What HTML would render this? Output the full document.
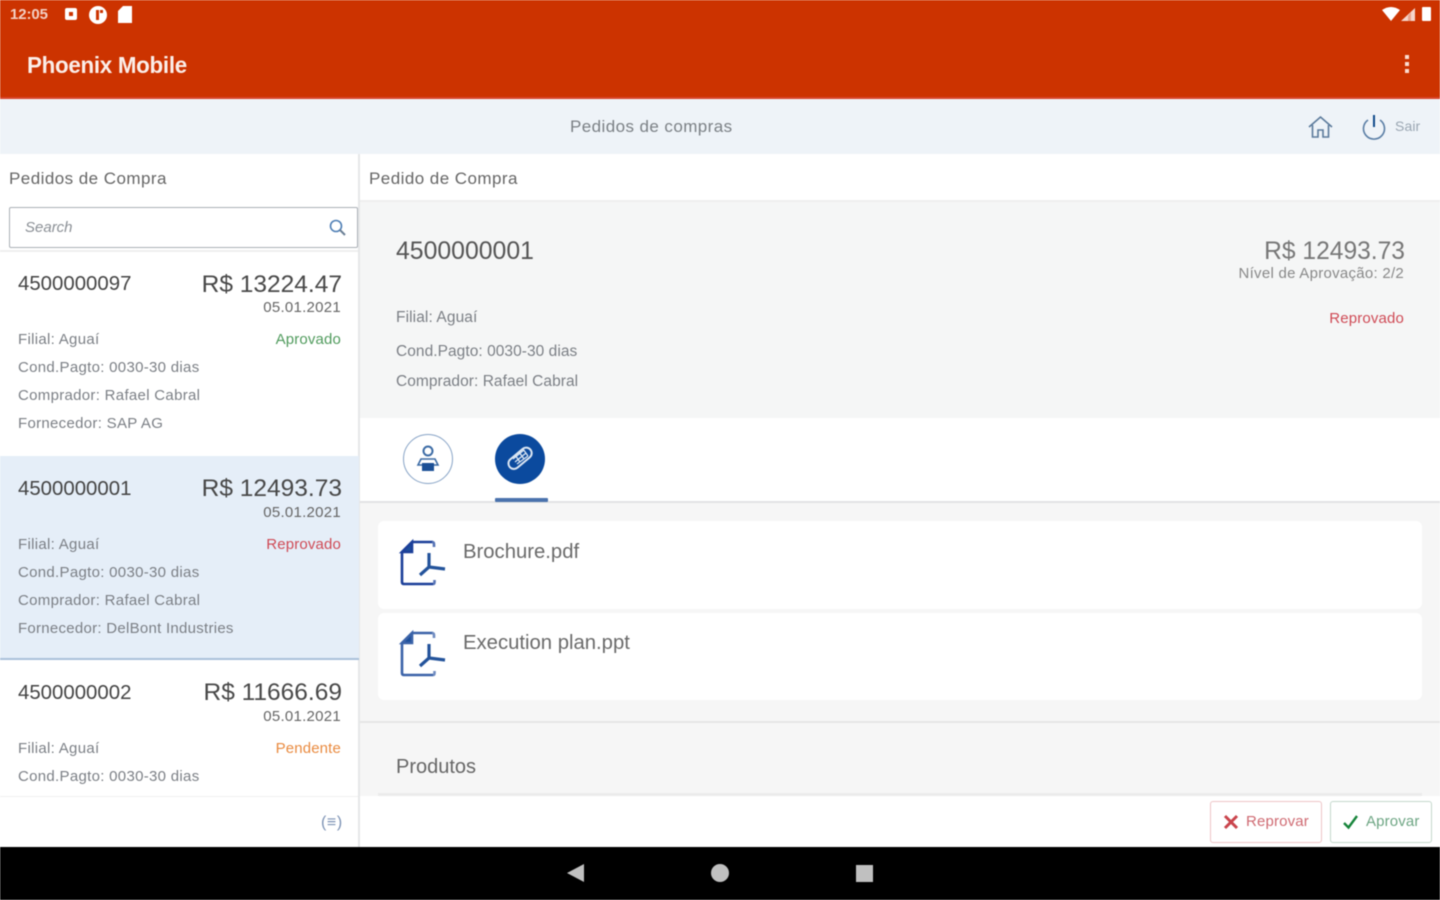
<!DOCTYPE html>
<html lang="pt">
<head>
<meta charset="utf-8">
<title>Phoenix Mobile</title>
<style>
html,body{margin:0;padding:0;width:1440px;height:900px;overflow:hidden;background:#fff}
#r{position:relative;width:1440px;height:900px;overflow:hidden;font-family:"Liberation Sans",sans-serif;color:#555;filter:blur(.6px)}
.a{position:absolute}
.t{position:absolute;white-space:nowrap;line-height:1}
.g{font-size:15px;letter-spacing:.3px;color:#7b7f85}
.n{font-size:20.400px;color:#444}
.v{font-size:24.500px;color:#484848}
.d{font-size:15px;letter-spacing:.27px;color:#666}
.s{font-size:15px;letter-spacing:.15px}
svg{position:absolute;overflow:visible}
</style>
</head>
<body>
<div id="r">
<!-- header -->
<div class="a" style="left:0;top:0;width:1440px;height:98px;background:#cc3300"></div>
<div class="a" style="left:0;top:97px;width:1440px;height:2px;background:#d8452a"></div>
<div class="t" style="left:10px;top:7px;font-size:15px;font-weight:bold;color:#f3d0c4;letter-spacing:-.1px">12:05</div>
<div class="a" style="left:65px;top:8px;width:12px;height:12px;background:#fff;border-radius:2px"></div>
<div class="a" style="left:69px;top:12px;width:4px;height:4px;background:#cc3300"></div>
<div class="a" style="left:89px;top:6px;width:18px;height:18px;background:#fff;border-radius:50%"></div>
<div class="a" style="left:96px;top:10px;width:3px;height:10px;background:#cc3300"></div>
<div class="a" style="left:100px;top:10px;width:3px;height:3px;background:#cc3300"></div>
<svg style="left:118px;top:6px" width="14" height="17"><path d="M5 0H14V17H0V5Z" fill="#fff"/></svg>
<svg style="left:1382px;top:7px" width="18" height="14"><path d="M0 3Q9-3 18 3L9 14Z" fill="#fff"/></svg>
<svg style="left:1401px;top:8px" width="14" height="13"><path d="M14 0V13H0Z" fill="#fff" opacity=".8"/><path d="M10 4V13H7V8Z" fill="#cc3300" opacity=".3"/></svg>
<div class="a" style="left:1422px;top:7px;width:9px;height:14px;background:#fff;border-radius:1px"></div>
<div class="t" style="left:27px;top:54px;font-size:23px;font-weight:bold;color:#fbeee9;letter-spacing:-.3px;transform:scaleX(.972);transform-origin:left">Phoenix Mobile</div>
<div class="a" style="left:1405px;top:55px;width:4px;height:4px;background:#fbdcd0"></div>
<div class="a" style="left:1405px;top:62px;width:4px;height:4px;background:#fbdcd0"></div>
<div class="a" style="left:1405px;top:69px;width:4px;height:4px;background:#fbdcd0"></div>

<!-- sub header -->
<div class="a" style="left:0;top:99px;width:1440px;height:55px;background:#eef3f8"></div>
<div class="t" style="left:570px;top:118px;font-size:17px;letter-spacing:.42px;color:#7b8085">Pedidos de compras</div>
<svg style="left:1308px;top:115px" width="26" height="24" fill="none" stroke="#5b7a9b" stroke-width="1.6"><path d="M1 12L12.500 2L24 12M4.500 10V22H10V15H15V22H20.500V10"/></svg>
<svg style="left:1361px;top:113px" width="26" height="28" fill="none" stroke="#5a7ea5" stroke-width="1.6"><path d="M7 7A10.500 10.500 0 1 0 19 7"/><path d="M13 2V14" stroke="#0f4a8a" stroke-width="2"/></svg>
<div class="t" style="left:1395px;top:119px;font-size:14px;letter-spacing:.1px;color:#9aa6b2">Sair</div>

<!-- left column -->
<div class="a" style="left:358px;top:154px;width:2px;height:693px;background:#e6e7e8"></div>
<div class="t" style="left:9px;top:170px;font-size:17px;letter-spacing:.45px;color:#666">Pedidos de Compra</div>
<div class="a" style="left:9px;top:207px;width:347px;height:39px;border:1.500px solid #aab0b6;border-radius:2px;background:#fff"></div>
<div class="t" style="left:25px;top:220px;font-size:15px;font-style:italic;color:#8a8f95">Search</div>
<svg style="left:329px;top:219px" width="18" height="18" fill="none" stroke="#4f7fb5" stroke-width="1.600"><circle cx="7" cy="7" r="5.500"/><path d="M11 11L16 16" stroke="#6a7f95" stroke-width="2"/></svg>
<div class="a" style="left:0;top:250px;width:358px;height:2px;background:#eeeeee"></div>

<!-- item 1 -->
<div class="t n" style="left:18px;top:274px">4500000097</div>
<div class="t v" style="right:1098px;top:272.500px">R$ 13224.47</div>
<div class="t d" style="right:1099px;top:300px">05.01.2021</div>
<div class="t g" style="left:18px;top:332px">Filial: Aguaí</div>
<div class="t s" style="right:1099px;top:332px;color:#4f9a5c">Aprovado</div>
<div class="t g" style="left:18px;top:360px">Cond.Pagto: 0030-30 dias</div>
<div class="t g" style="left:18px;top:388px">Comprador: Rafael Cabral</div>
<div class="t g" style="left:18px;top:416px">Fornecedor: SAP AG</div>

<!-- item 2 selected -->
<div class="a" style="left:0;top:456px;width:359px;height:203px;background:#e5eef8"></div>
<div class="a" style="left:0;top:658px;width:359px;height:2px;background:#a9c0da"></div>
<div class="t n" style="left:18px;top:478.500px">4500000001</div>
<div class="t v" style="right:1098px;top:476.500px">R$ 12493.73</div>
<div class="t d" style="right:1099px;top:504.500px">05.01.2021</div>
<div class="t g" style="left:18px;top:536.500px">Filial: Aguaí</div>
<div class="t s" style="right:1099px;top:536.500px;color:#cf4a55">Reprovado</div>
<div class="t g" style="left:18px;top:564.500px">Cond.Pagto: 0030-30 dias</div>
<div class="t g" style="left:18px;top:592.500px">Comprador: Rafael Cabral</div>
<div class="t g" style="left:18px;top:620.500px;letter-spacing:.27px">Fornecedor: DelBont Industries</div>

<!-- item 3 -->
<div class="t n" style="left:18px;top:682.500px">4500000002</div>
<div class="t v" style="right:1098px;top:680.500px">R$ 11666.69</div>
<div class="t d" style="right:1099px;top:708.500px">05.01.2021</div>
<div class="t g" style="left:18px;top:740.500px">Filial: Aguaí</div>
<div class="t s" style="right:1099px;top:740.500px;color:#e98a3f">Pendente</div>
<div class="t g" style="left:18px;top:768.500px">Cond.Pagto: 0030-30 dias</div>

<!-- left footer -->
<div class="a" style="left:0;top:796px;width:358px;height:51px;background:#fff;border-top:1px solid #f0f0f0;box-sizing:border-box"></div>
<div class="t" style="left:321px;top:815px;font-size:16px;letter-spacing:.6px;color:#7d93b5">(≡)</div>

<!-- right column -->
<div class="t" style="left:369px;top:170px;font-size:17px;letter-spacing:.45px;color:#666">Pedido de Compra</div>
<div class="a" style="left:360px;top:200px;width:1080px;height:218px;background:#f5f6f6;border-top:2px solid #eeeeee;box-sizing:border-box"></div>
<div class="t" style="left:396px;top:239.500px;font-size:24.800px;color:#555">4500000001</div>
<div class="t" style="right:35px;top:239.500px;font-size:24.600px;color:#777">R$ 12493.73</div>
<div class="t d" style="right:36px;top:266px;color:#888">Nível de Aprovação: 2/2</div>
<div class="t g" style="left:396px;top:310px;font-size:15.500px;letter-spacing:.1px">Filial: Aguaí</div>
<div class="t s" style="right:36px;top:311px;color:#cf4a55">Reprovado</div>
<div class="t g" style="left:396px;top:344px;font-size:15.500px;letter-spacing:.05px">Cond.Pagto: 0030-30 dias</div>
<div class="t g" style="left:396px;top:374px;font-size:15.500px;letter-spacing:.05px">Comprador: Rafael Cabral</div>

<!-- tabs -->
<div class="a" style="left:403px;top:434px;width:48px;height:48px;border:1.500px solid #87a3c6;border-radius:50%;background:#fff"></div>
<svg style="left:416px;top:444px" width="24" height="30"><circle cx="12" cy="7" r="4.500" fill="none" stroke="#3c6ba5" stroke-width="2"/><path d="M5 15H19L22 21H2Z" fill="none" stroke="#3c6ba5" stroke-width="1.600"/><rect x="6" y="19" width="12" height="8" fill="#1b4f96"/></svg>
<div class="a" style="left:495px;top:434px;width:50px;height:50px;border-radius:50%;background:#0b4a9e"></div>
<svg style="left:505px;top:444px" width="30" height="30" fill="none" stroke="#dbe6f3" stroke-width="2"><rect x="2" y="9" width="27" height="11" rx="5.500" transform="rotate(-40 15 15)"/><path d="M8 15L19 6M10 18L21 9M12 20L23 12M10 11L15 18M14 8L19 15M18 5L23 12" stroke-width="1.300"/></svg>
<div class="a" style="left:360px;top:501px;width:1080px;height:2px;background:#e2e3e4"></div>
<div class="a" style="left:495px;top:498px;width:53px;height:4px;background:#4a72ad;border-radius:1px"></div>

<!-- attachments panel -->
<div class="a" style="left:360px;top:503px;width:1080px;height:293px;background:#f6f6f6"></div>
<div class="a" style="left:378px;top:521px;width:1044px;height:88px;background:#fff;border-radius:6px"></div>
<div class="a" style="left:378px;top:613px;width:1044px;height:87px;background:#fff;border-radius:6px"></div>
<svg style="left:399px;top:539px" width="48" height="48" fill="none" stroke="#1c3f99" stroke-width="2.600"><path d="M34 3H13L3 13V43Q3 45 5 45H34"/><path d="M33 3Q35 3 35 5V8M34 45Q35.500 45 35.500 43V41" stroke="#5673b5"/><path d="M3 13H13V3Z" fill="#1c4f9a"/><path d="M30 14V28L21 36M30 28L46 30" stroke="#23539b" stroke-width="3.200"/></svg>
<svg style="left:399px;top:630px" width="48" height="48" fill="none" stroke="#3b63a8" stroke-width="2.600"><path d="M34 3H13L3 13V43Q3 45 5 45H34"/><path d="M33 3Q35 3 35 5V8M34 45Q35.500 45 35.500 43V41" stroke="#6f8bc0"/><path d="M3 13H13V3Z" fill="#1c4f9a"/><path d="M30 14V28L21 36M30 28L46 30" stroke="#23539b" stroke-width="3.200"/></svg>
<div class="t" style="left:463px;top:542px;font-size:20.300px;color:#6a6a6a">Brochure.pdf</div>
<div class="t" style="left:463px;top:633px;font-size:20.300px;color:#6a6a6a">Execution plan.ppt</div>
<div class="a" style="left:360px;top:721px;width:1080px;height:2px;background:#e6e6e6"></div>
<div class="t" style="left:396px;top:757px;font-size:20px;color:#666">Produtos</div>
<div class="a" style="left:378px;top:793px;width:1044px;height:3px;background:#ebebeb"></div>

<!-- footer buttons -->
<div class="a" style="left:360px;top:796px;width:1080px;height:51px;background:#fff"></div>
<div class="a" style="left:1210px;top:801px;width:110px;height:40px;border:1.500px solid #eec4c6;border-radius:3px"></div>
<svg style="left:1224px;top:815px" width="14" height="14" stroke="#c9434b" stroke-width="3"><path d="M1 1L13 13M13 1L1 13"/></svg>
<div class="t" style="left:1246px;top:814px;font-size:15px;letter-spacing:.15px;color:#cf6a72">Reprovar</div>
<div class="a" style="left:1330px;top:801px;width:100px;height:40px;border:1.500px solid #c4d8cc;border-radius:3px"></div>
<svg style="left:1343px;top:815px" width="16" height="14" fill="none" stroke="#16843a" stroke-width="2.400"><path d="M1 8L5.500 12.500L14 1"/></svg>
<div class="t" style="left:1366px;top:814px;font-size:15px;letter-spacing:.15px;color:#6da583">Aprovar</div>

<!-- android nav -->
<div class="a" style="left:0;top:847px;width:1440px;height:53px;background:#000"></div>
<svg style="left:567px;top:864px" width="18" height="18"><path d="M17 0V18L0 9Z" fill="#c0c0c0"/></svg>
<div class="a" style="left:711px;top:864px;width:18px;height:18px;border-radius:50%;background:#c0c0c0"></div>
<div class="a" style="left:856px;top:865px;width:17px;height:17px;background:#c0c0c0"></div>
</div>
</body>
</html>
